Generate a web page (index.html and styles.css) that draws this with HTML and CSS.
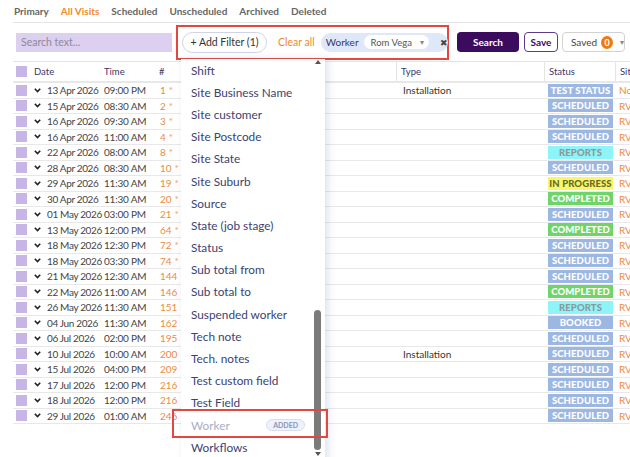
FILE: index.html
```html
<!DOCTYPE html>
<html lang="en">
<head>
    <meta charset="UTF-8">
    <title>Visits</title>
    <link rel="stylesheet" href="styles.css">
</head>
<body>

    <div class="page">
        <!-- Tabs -->
        <nav class="tabs">
            <span class="tab">Primary</span>
            <span class="tab active">All Visits</span>
            <span class="tab">Scheduled</span>
            <span class="tab">Unscheduled</span>
            <span class="tab">Archived</span>
            <span class="tab">Deleted</span>
        </nav>

        <!-- Toolbar -->
        <div class="toolbar">
            <input class="search" type="text" placeholder="Search text...">
            <div class="filter-box">
                <button class="add-filter">+ Add Filter (1)</button>
                <span class="clear-all">Clear all</span>
                <div class="chip">
                    <span class="chip-label">Worker</span>
                    <span class="chip-select">Rom Vega <span class="caret">▾</span></span>
                    <span class="chip-close">✖</span>
                </div>
            </div>
            <button class="btn-search">Search</button>
            <button class="btn-save">Save</button>
            <button class="btn-saved">Saved <span class="count">0</span> <span class="caret">▾</span></button>
        </div>

        <!-- Table -->
        <div class="table" id="table">
            <div class="row head">
                <div class="cell"><span class="check"></span></div>
                <div class="cell">Date</div>
                <div class="cell">Time</div>
                <div class="cell">#</div>
                <div class="cell"></div>
                <div class="cell sep">Type</div>
                <div class="cell sep">Status</div>
                <div class="cell sep">Site</div>
            </div>
        </div>
    </div>

    <!-- Add filter menu -->
    <div class="menu">
        <span class="arrow-up"></span>
        <div class="menu-item">Shift</div>
        <div class="menu-item">Site Business Name</div>
        <div class="menu-item">Site customer</div>
        <div class="menu-item">Site Postcode</div>
        <div class="menu-item">Site State</div>
        <div class="menu-item">Site Suburb</div>
        <div class="menu-item">Source</div>
        <div class="menu-item">State (job stage)</div>
        <div class="menu-item">Status</div>
        <div class="menu-item">Sub total from</div>
        <div class="menu-item">Sub total to</div>
        <div class="menu-item">Suspended worker</div>
        <div class="menu-item">Tech note</div>
        <div class="menu-item">Tech. notes</div>
        <div class="menu-item">Test custom field</div>
        <div class="menu-item">Test Field</div>
        <div class="menu-item added">Worker <span class="added-tag">ADDED</span></div>
        <div class="menu-item">Workflows</div>
        <span class="thumb"></span>
        <span class="arrow-down"></span>
    </div>
    <div class="highlight"></div>

    <script>
        const visits = [
            ["13 Apr 2026", "09:00 PM", "1", true, "Installation", "TEST STATUS", "No"],
            ["15 Apr 2026", "08:30 AM", "2", true, "", "SCHEDULED", "RV"],
            ["16 Apr 2026", "09:30 AM", "3", true, "", "SCHEDULED", "RV"],
            ["16 Apr 2026", "11:00 AM", "4", true, "", "SCHEDULED", "RV"],
            ["22 Apr 2026", "08:00 AM", "8", true, "", "REPORTS", "RV"],
            ["28 Apr 2026", "08:30 AM", "10", true, "", "SCHEDULED", "RV"],
            ["29 Apr 2026", "11:30 AM", "19", true, "", "IN PROGRESS", "RV"],
            ["30 Apr 2026", "11:30 AM", "20", true, "", "COMPLETED", "RV"],
            ["01 May 2026", "03:00 PM", "21", true, "", "SCHEDULED", "RV"],
            ["13 May 2026", "12:00 PM", "64", true, "", "COMPLETED", "RV"],
            ["18 May 2026", "12:30 PM", "72", true, "", "SCHEDULED", "RV"],
            ["18 May 2026", "03:30 PM", "74", true, "", "SCHEDULED", "RV"],
            ["21 May 2026", "12:30 AM", "144", true, "", "SCHEDULED", "RV"],
            ["22 May 2026", "11:00 AM", "146", true, "", "COMPLETED", "RV"],
            ["26 May 2026", "11:30 AM", "151", true, "", "REPORTS", "RV"],
            ["04 Jun 2026", "11:30 AM", "162", true, "", "BOOKED", "RV"],
            ["06 Jul 2026", "02:00 PM", "195", false, "", "SCHEDULED", "RV"],
            ["10 Jul 2026", "10:00 AM", "200", true, "Installation", "SCHEDULED", "RV"],
            ["15 Jul 2026", "04:00 PM", "209", true, "", "SCHEDULED", "RV"],
            ["17 Jul 2026", "12:00 PM", "216", true, "", "SCHEDULED", "RV"],
            ["18 Jul 2026", "12:00 PM", "216", false, "", "SCHEDULED", "RV"],
            ["29 Jul 2026", "01:00 AM", "246", true, "", "SCHEDULED", "RV"]
        ];

        const statusClass = {
            "TEST STATUS": "blue", "SCHEDULED": "blue", "BOOKED": "blue",
            "REPORTS": "cyan", "IN PROGRESS": "yellow", "COMPLETED": "green"
        };

        const chevron = '<svg class="chev" width="7" height="5" viewBox="0 0 7 5"><path d="M0.8 0.8 L3.5 3.6 L6.2 0.8" fill="none" stroke="#222" stroke-width="1.6"/></svg>';

        const table = document.getElementById("table");
        visits.forEach(v => {
            const row = document.createElement("div");
            row.className = "row";
            row.innerHTML = `
                <div class="cell"><span class="check"></span></div>
                <div class="cell date">${chevron}${v[0]}</div>
                <div class="cell time">${v[1]}</div>
                <div class="cell num">${v[2]}${v[3] ? ' <span class="star">*</span>' : ''}</div>
                <div class="cell"></div>
                <div class="cell type">${v[4]}</div>
                <div class="cell"><span class="badge ${statusClass[v[5]]}">${v[5]}</span></div>
                <div class="cell site">${v[6]}</div>
            `;
            table.appendChild(row);
        });
    </script>

</body>
</html>
```

FILE: styles.css
```css
/* General */
body { margin: 0; background: #fff; font-family: Lato, "Open Sans", sans-serif; color: #444; width: 630px; height: 457px; overflow: hidden; position: relative; }
button, input { font-family: inherit; }
.page { margin-left: 13px; }

/* Tabs */
.tabs { display: flex; gap: 12px; height: 22px; align-items: center; padding-left: 1px; border-bottom: 1px solid #e4e4e4; }
.tab { font-size: 10px; font-weight: 700; color: #666; }
.tab.active { color: #f08a2c; }

/* Toolbar */
.toolbar { display: flex; align-items: center; height: 38px; }
.toolbar > * { flex-shrink: 0; white-space: nowrap; }
.search { width: 156px; height: 19px; margin-left: 3px; box-sizing: border-box; border: none; background: #dccff0; padding: 0 5px; font-size: 10.5px; color: #555; outline: none; }
.search::placeholder { color: #8c8a96; }
.filter-box { display: flex; align-items: center; width: 273px; height: 35px; margin-left: 4px; box-sizing: border-box; border: 2px solid #e2483f; padding-left: 4px; }
.filter-box > * { flex-shrink: 0; white-space: nowrap; }
.add-filter { width: 85px; height: 21px; border: 1px solid #cfd5e6; border-radius: 11px; background: #fff; font-size: 10.5px; color: #333; padding: 0; }
.clear-all { margin-left: 11px; font-size: 10.5px; color: #f08a2c; }
.chip { display: flex; align-items: center; width: 127px; height: 19px; margin-left: 6px; border-radius: 10px; background: #dfe8f8; }
.chip-label { margin-left: 5px; font-size: 10px; color: #3d3566; }
.chip-select { display: flex; justify-content: space-between; align-items: center; width: 69px; height: 14px; margin-left: 5px; box-sizing: border-box; padding: 0 5px 0 7px; border-radius: 7px; background: #fff; font-size: 9.5px; color: #555; }
.chip-select .caret { font-size: 8px; color: #888; }
.chip-close { margin-left: 11px; font-size: 9px; color: #444; }

.btn-search { width: 62px; height: 20px; margin-left: 8px; border: none; border-radius: 4px; background: #3b0c5e; color: #fff; font-size: 10px; font-weight: 700; padding: 0; }
.btn-save { width: 34px; height: 20px; margin-left: 5px; border: 1px solid #5c3d8a; border-radius: 4px; background: #fff; color: #3b0c5e; font-size: 10px; font-weight: 700; padding: 0; }
.btn-saved { display: flex; align-items: center; width: 63px; height: 20px; margin-left: 4px; border: 1px solid #d2d2d2; border-radius: 4px; background: #fff; color: #444; font-size: 10px; padding: 0 0 0 8px; box-sizing: border-box; }
.count { display: inline-block; width: 13px; height: 13px; margin-left: 4px; line-height: 13px; border-radius: 50%; background: #f07a12; color: #fff; font-size: 9px; font-weight: 700; text-align: center; }
.btn-saved .caret { margin-left: 7px; font-size: 8px; color: #888; }

/* Table */
.table { border-top: 1px solid #e4e4e4; }
.row { display: grid; grid-template-columns: 17px 70px 55px 25px 216px 148px 71px 1fr; height: 15.5px; align-items: center; border-bottom: 1px solid #e8e8e8; box-sizing: border-box; font-size: 10px; }
.row.head { height: 21px; font-size: 9.5px; color: #3d3566; border-bottom: 2px solid #e8e8e8; }
.cell { white-space: nowrap; overflow: hidden; height: 100%; display: flex; align-items: center; }
.head .cell { padding-left: 4px; }
.head .cell:first-child { padding-left: 0; }
.head .sep { border-left: 1px solid #e4e4e4; }
.check { display: inline-block; width: 11px; height: 11px; margin-left: 3px; background: #c7b5e6; }
.date { overflow: visible; letter-spacing: -0.35px; }
.date .chev { flex-shrink: 0; margin: 0 6px 0 4px; }
.time { padding-left: 4px; overflow: visible; letter-spacing: -0.2px; }
.num { padding-left: 5px; overflow: visible; color: #ee8a3e; }
.star { margin-left: 3px; color: #f0a060; }
.type { padding-left: 7px; color: #333; }
.badge { display: inline-block; width: 65px; height: 13px; margin-left: 4px; line-height: 13px; text-align: center; font-size: 9.5px; font-weight: 900; letter-spacing: 0.1px; }
.badge.blue { background: #9cb8e2; color: #fff; }
.badge.cyan { background: #8ff4f7; color: #8a9a9a; }
.badge.yellow { background: #f8f66a; color: #6a6a2a; }
.badge.green { background: #6fd56a; color: #fff; }
.site { padding-left: 4px; color: #ee8a3e; }

/* Filter menu */
.menu { position: absolute; left: 181px; top: 59px; width: 144px; height: 410px; background: #fff; box-shadow: 3px 0 8px rgba(80, 90, 170, 0.18); }
.menu-item { display: flex; align-items: center; height: 22.2px; padding-left: 10px; font-size: 11.8px; color: #3c4272; white-space: nowrap; }
.menu-item.added { color: #a8aec6; }
.added-tag { margin-left: auto; margin-right: 20px; padding: 1px 6px; border: 1px solid #d6def0; border-radius: 7px; background: #eef2fb; color: #8a94b6; font-size: 7px; font-weight: 700; }
.thumb { position: absolute; left: 133px; top: 251px; width: 7px; height: 140px; border-radius: 4px; background: #7b7b7b; }
.arrow-up { position: absolute; left: 134px; top: 1px; border: 3px solid transparent; border-bottom: 4px solid #555; border-top: none; }
.arrow-down { position: absolute; left: 134px; top: 393px; border: 3px solid transparent; border-top: 4px solid #555; border-bottom: none; }
.highlight { position: absolute; left: 172px; top: 409px; width: 156px; height: 29px; box-sizing: border-box; border: 2px solid #e2483f; }
```
